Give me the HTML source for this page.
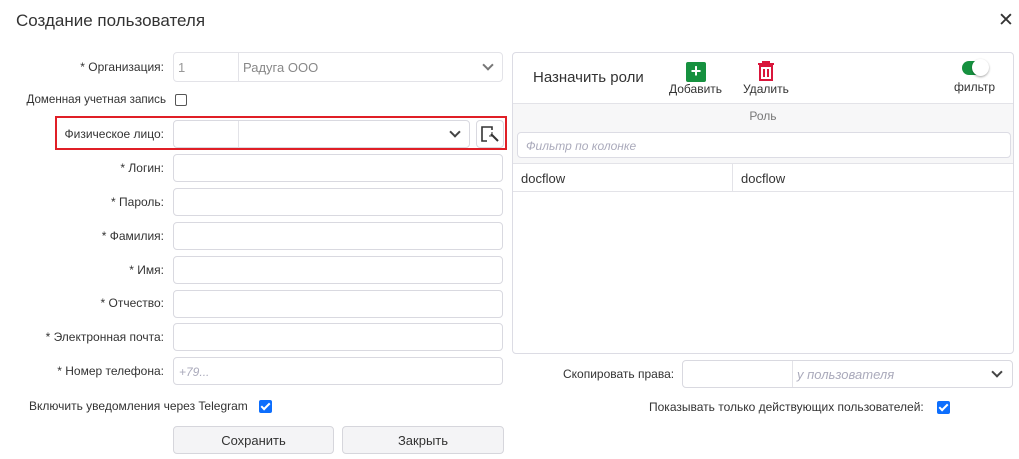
<!DOCTYPE html>
<html><head><meta charset="utf-8"><style>
*{box-sizing:border-box;margin:0;padding:0}
body{width:1019px;height:459px;background:#fff;font-family:"Liberation Sans",sans-serif;color:#333;position:relative;overflow:hidden;font-size:12px}
.a{position:absolute}
.lbl{position:absolute;right:855px;font-size:12px;color:#333;white-space:nowrap;line-height:14px}
.inp{position:absolute;left:173px;width:330px;height:28px;border:1px solid #d9d9e0;border-radius:4px;background:#fff}
.chev{position:absolute;width:8px;height:8px;border-right:2px solid #444;border-bottom:2px solid #444;transform:rotate(45deg)}
.cb{position:absolute;width:13px;height:13px;border-radius:2px;background:#0d6efd}
.cb:after{content:"";position:absolute;left:4px;top:1px;width:3px;height:7px;border-right:2px solid #fff;border-bottom:2px solid #fff;transform:rotate(45deg)}
.btn{position:absolute;top:426px;height:28px;border:1px solid #d6d6dc;border-radius:4px;background:#f4f4f6;text-align:center;line-height:27px;font-size:13px;color:#333}
</style></head><body>
<div class="a" style="left:16px;top:11px;font-size:17px;color:#333">Создание пользователя</div>
<div class="a" style="left:998px;top:9px;font-size:19px;color:#333">✕</div>

<div class="lbl" style="top:60px">* Организация:</div>
<div class="inp" style="top:52px;height:30px;border-color:#e3e3e8"><div class="a" style="left:64px;top:0;width:1px;height:28px;background:#e3e3e8"></div>
<span class="a" style="left:4px;top:7px;color:#999;font-size:13px">1</span><span class="a" style="left:69px;top:7px;color:#888;font-size:13px">Радуга ООО</span><div class="chev" style="left:310px;top:8px;border-color:#777"></div></div>

<div class="lbl" style="top:93px;right:853px;font-size:11.6px">Доменная учетная запись</div>
<div class="a" style="left:175px;top:94px;width:12px;height:12px;border:1.5px solid #555;border-radius:2px"></div>

<div class="a" style="left:55px;top:116px;width:452px;height:34px;border:2px solid #e01f26"></div>
<div class="lbl" style="top:127px">Физическое лицо:</div>
<div class="inp" style="top:120px;width:297px"><div class="a" style="left:64px;top:0;width:1px;height:26px;background:#e3e3e8"></div><div class="chev" style="left:277px;top:7px"></div></div>
<div class="a" style="left:476px;top:120px;width:28px;height:28px;border:1px solid #d9d9e0;border-radius:4px">
<svg width="28" height="28" viewBox="0 0 28 28" style="position:absolute;left:-1px;top:-1px"><path d="M13 7H6v14h5" fill="none" stroke="#333" stroke-width="1.6"/><path d="M13 7h3v3" fill="none" stroke="#333" stroke-width="1.6"/><path d="M15 14l7 7" stroke="#333" stroke-width="2"/><path d="M13 16h3M16 12v3" stroke="#333" stroke-width="1"/></svg></div>

<div class="lbl" style="top:161px">* Логин:</div><div class="inp" style="top:154px"></div>
<div class="lbl" style="top:195px">* Пароль:</div><div class="inp" style="top:188px"></div>
<div class="lbl" style="top:229px">* Фамилия:</div><div class="inp" style="top:222px"></div>
<div class="lbl" style="top:263px">* Имя:</div><div class="inp" style="top:256px"></div>
<div class="lbl" style="top:296px">* Отчество:</div><div class="inp" style="top:290px"></div>
<div class="lbl" style="top:330px">* Электронная почта:</div><div class="inp" style="top:323px"></div>
<div class="lbl" style="top:364px">* Номер телефона:</div><div class="inp" style="top:357px"><span class="a" style="left:5px;top:7px;color:#aab;font-style:italic;font-size:12px">+79...</span></div>

<div class="a" style="left:29px;top:399px;font-size:12px">Включить уведомления через Telegram</div>
<div class="cb" style="left:259px;top:400px"></div>

<div class="btn" style="left:173px;width:161px">Сохранить</div>
<div class="btn" style="left:342px;width:162px">Закрыть</div>

<div class="a" style="left:512px;top:52px;width:502px;height:302px;border:1px solid #dcdce4;border-radius:4px">
<div class="a" style="left:20px;top:16px;font-size:15px;color:#333">Назначить роли</div>
<div class="a" style="left:173px;top:9px;width:20px;height:20px;background:#16913f;border-radius:2px;color:#fff;font-size:18px;line-height:19px;text-align:center;font-weight:bold">+</div>
<div class="a" style="left:156px;top:29px;font-size:12px">Добавить</div>
<svg class="a" style="left:244px;top:8px" width="18" height="20" viewBox="0 0 18 20"><path d="M1 3h16M6 3V1h6v2" stroke="#d9163b" stroke-width="2" fill="none"/><rect x="3" y="5" width="12" height="14" fill="none" stroke="#d9163b" stroke-width="2"/><path d="M7 8v8M11 8v8" stroke="#d9163b" stroke-width="2"/></svg>
<div class="a" style="left:230px;top:29px;font-size:12px">Удалить</div>
<div class="a" style="left:449px;top:8px;width:26px;height:14px;border-radius:7px;background:#16913f"></div>
<div class="a" style="left:459px;top:6px;width:17px;height:17px;border-radius:50%;background:#fff;box-shadow:0 1px 2px rgba(0,0,0,.35)"></div>
<div class="a" style="left:441px;top:27px;font-size:12px">фильтр</div>
<div class="a" style="left:0;top:50px;width:500px;height:60px;background:#f7f7f8;border-top:1px solid #e3e3e8"></div>
<div class="a" style="left:0;top:56px;width:500px;text-align:center;color:#777;font-size:12px">Роль</div>
<div class="a" style="left:4px;top:79px;width:494px;height:26px;border:1px solid #dcdce4;border-radius:4px;background:#fff"><span class="a" style="left:8px;top:6px;color:#aab;font-style:italic;font-size:12px">Фильтр по колонке</span></div>
<div class="a" style="left:0;top:110px;width:500px;height:29px;border-top:1px solid #e3e3e8;border-bottom:1px solid #e3e3e8;background:#fff"></div>
<div class="a" style="left:219px;top:110px;width:1px;height:29px;background:#e3e3e8"></div>
<div class="a" style="left:8px;top:118px;font-size:13px">docflow</div>
<div class="a" style="left:228px;top:118px;font-size:13px">docflow</div>
</div>

<div class="a" style="left:563px;top:367px;font-size:12px">Скопировать права:</div>
<div class="a" style="left:682px;top:360px;width:331px;height:28px;border:1px solid #d9d9e0;border-radius:4px"><div class="a" style="left:109px;top:0;width:1px;height:26px;background:#e3e3e8"></div><span class="a" style="left:114px;top:6px;color:#aab;font-style:italic;font-size:13px">у пользователя</span><div class="chev" style="left:310px;top:7px"></div></div>
<div class="a" style="left:649px;top:400px;font-size:12px">Показывать только действующих пользователей:</div>
<div class="cb" style="left:937px;top:401px"></div>
</body></html>
